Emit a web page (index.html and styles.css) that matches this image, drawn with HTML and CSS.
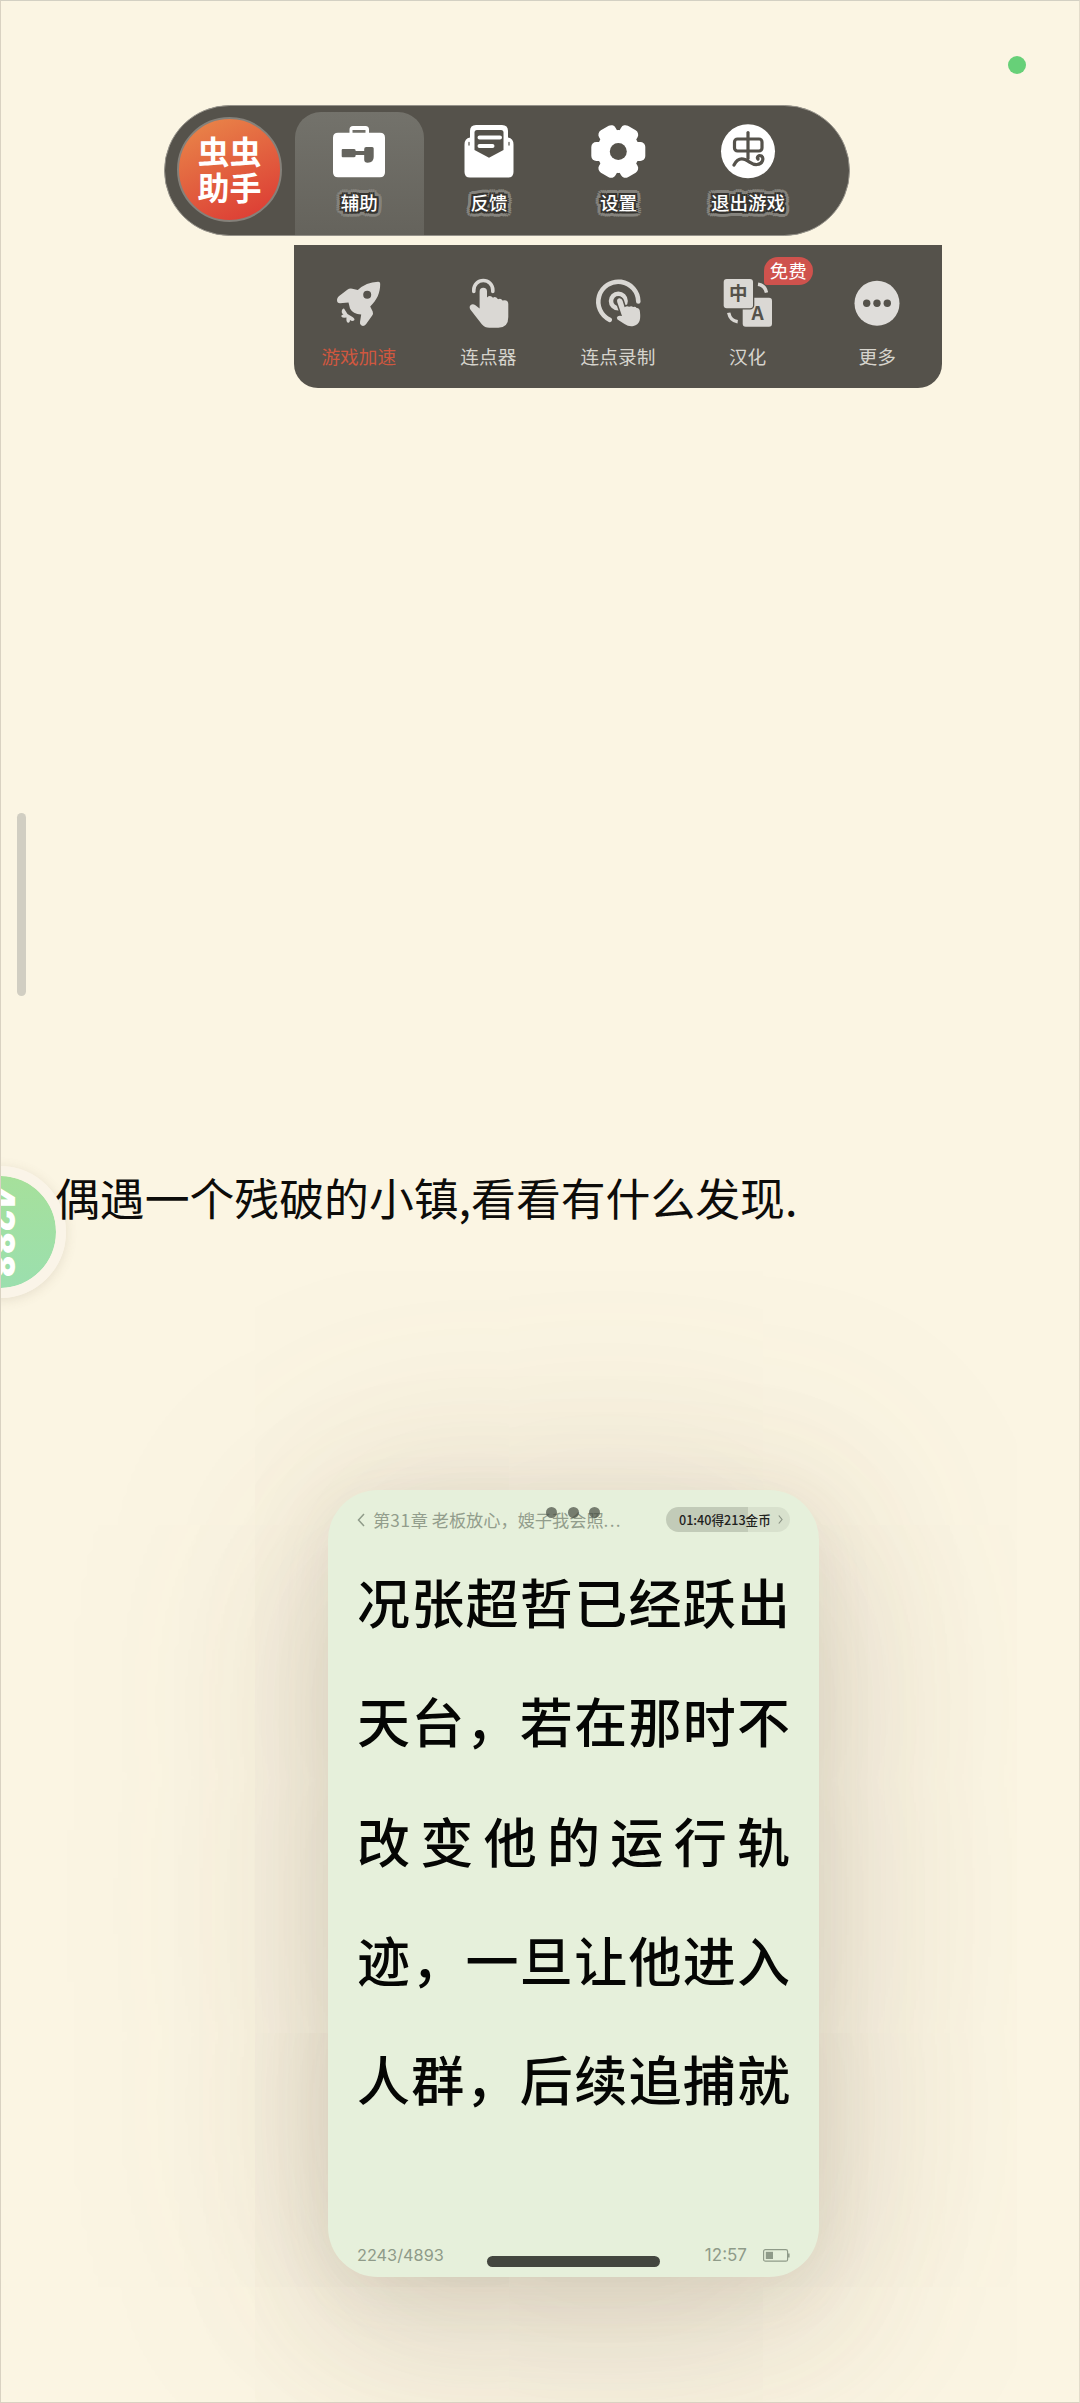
FILE: index.html
```html
<!DOCTYPE html>
<html lang="zh-CN">
<head>
<meta charset="utf-8">
<title>虫虫助手</title>
<link rel="stylesheet" href="styles.css">
</head>
<body>
<main class="screen">
  <span class="privacy-dot"></span>
  <span class="scroll-handle"></span>

  <nav class="toolbar">
    <div class="brand"><span>虫虫</span><span>助手</span></div>
    <div class="tab tab-active">
      <svg class="icon" viewBox="0 0 60 60">
        <path fill="#fff" fill-rule="evenodd" d="M24 4h12.500q3.500 0 3.500 3.500v3.200h11q5 0 5 5v34.600q0 5-5 5H9q-5 0-5-5V15.700q0-5 5-5h11.500V7.500Q20.500 4 24 4ZM23.500 8v2.700h13V8Z"/>
        <path fill="#65645e" d="M13.700 27h11.500q1.500 0 1.500 2h8.500v-2q0-2 2-2h6q1.500 0 1.500 1.500V35q0 5.700-6 5.700-3.500 0-3.500-3V33h-8.500q0 2.300-1.500 2.300H13.700q-1 0-1-1V28q0-1 1-1Z"/>
      </svg>
      <span class="tab-label">辅助</span>
    </div>
    <div class="tab">
      <svg class="icon" viewBox="0 0 60 60">
        <path fill="#fff" d="M17 3h26q6 0 6 6v6.500q5.500 1 5.500 7V50q0 5.500-5.500 5.500H11q-5.500 0-5.500-5.500V22.500q0-6 5.500-7V9q0-6 6-6Z"/>
        <path fill="#55524b" d="M18 8h24q2.500 0 2.500 2.500v17.500L30 35.700 15.500 28V10.500Q15.500 8 18 8Z"/>
        <path stroke="#fff" stroke-width="4" stroke-linecap="round" d="M20.500 15.500h20.500M20.500 24h13"/>
        <path stroke="#77756f" stroke-width="1.500" stroke-linecap="round" d="M10 20.500v2.500M50 20.500v2.500"/>
      </svg>
      <span class="tab-label">反馈</span>
    </div>
    <div class="tab">
      <svg class="icon" viewBox="0 0 60 60">
        <g fill="#fff" transform="translate(30.300 29.500)">
          <circle r="21.500"/>
          <rect x="-27" y="-9.500" width="54" height="19" rx="5"/>
          <rect x="-27" y="-9.500" width="54" height="19" rx="5" transform="rotate(60)"/>
          <rect x="-27" y="-9.500" width="54" height="19" rx="5" transform="rotate(120)"/>
          <circle r="8.500" fill="#55524b"/>
        </g>
      </svg>
      <span class="tab-label">设置</span>
    </div>
    <div class="tab">
      <svg class="icon" viewBox="0 0 60 60">
        <circle cx="30" cy="29.300" r="27" fill="#fff"/>
        <g fill="none" stroke="#55524b" stroke-width="3.200" stroke-linecap="round">
          <rect x="16.500" y="17" width="27.500" height="12" rx="3"/>
          <path d="M30 10.500v26"/>
          <path d="M16 43q4-8 11-5.500c5 2 7 5.500 12 5 6-.5 7-6.500 4.500-8.500-3-1.500-5 1.500-3.500 3"/>
        </g>
      </svg>
      <span class="tab-label">退出游戏</span>
    </div>
  </nav>

  <section class="panel">
    <div class="tool">
      <svg class="icon" viewBox="0 0 60 60" fill="#dad8d4">
        <path fill-rule="evenodd" d="M49 7.700q2.200-.2 2.200 2c0 9.500-3.200 16-10 22.800l2.500 5q.8 2-.5 4L37 50.200q-2 2.500-4.500 1.400-2-.8-1.500-3.500l1.200-7.500q-8.500-.6-11.200-6l-1.500-6-8.500.6q-3 0-3-3.200 0-2.300 1.800-3.800l8.500-6.500q2.200-1.600 5-1l5.500 1.200Q37 8.300 49 7.700ZM38.200 16.700a4 4 0 1 0 0 8 4 4 0 0 0 0-8Z"/>
        <path d="M15 34.500l3.500 5.500 5 3q3 2 1.500 3.500-2 1-4-.5 0 3.500-2.500 2.500-1.500-1-1-5-4 .5-5-.8-.7-1.700 2-2.200-2.500-1.500-1.500-4.500.8-1.800 2-1.500Z"/>
      </svg>
      <span class="tool-label tool-label-hot">游戏加速</span>
    </div>
    <div class="tool">
      <svg class="icon" viewBox="0 0 60 60" fill="#dad8d4">
        <path fill="none" stroke="#dad8d4" stroke-width="3.600" stroke-linecap="round" d="M15.800 17.500v-1.500a9.500 9.500 0 0 1 19 0v1.500"/>
        <path d="M21.600 17.400a3.700 3.700 0 0 1 7.400 0v6.200q3-3 6 .1 2.500-1.700 5 1.500 3-1.400 4.500 1.200 5.800-1.200 5.800 3.600v13q0 10.700-10 10.700h-9q-4.500 0-7.500-3.500L12.700 36q-2-3-.2-4.800 2-1.700 4.600-.3l4.500 3.600Z"/>
      </svg>
      <span class="tool-label">连点器</span>
    </div>
    <div class="tool">
      <svg class="icon" viewBox="0 0 60 60" fill="#dad8d4">
        <g fill="none" stroke="#dad8d4" stroke-linecap="round">
          <path stroke-width="4.600" d="M50.300 27.500a20 20 0 1 0-28.500 18.300"/>
          <circle cx="30.300" cy="27" r="7.300" stroke-width="4.500"/>
        </g>
        <path stroke="#55524b" stroke-width="3" paint-order="stroke" d="M29.200 28q-.7-3.200 2-3.700 2.500-.3 3.400 2.500l2 6.500q2.500-2 4.500-.5 2.300-1.300 4 .2 2.500-.7 3.500 1 3-.2 3.300 3.500.8 6.500-.4 9.500-1.500 4-6 5-4.500 1-9-2l-7-4.500q-1.500-2 .3-3.300 1.200-.8 4.200-.2Z"/>
      </svg>
      <span class="tool-label">连点录制</span>
    </div>
    <div class="tool">
      <svg class="icon" viewBox="0 0 60 60" fill="#dad8d4">
        <path fill="none" stroke="#dad8d4" stroke-width="3.400" d="M40 10.200q7 1 8.500 8.500M10.700 38.800q1.500 8 9 9"/>
        <rect x="24.700" y="23.700" width="29.300" height="29" rx="3"/>
        <rect x="5.700" y="5" width="29.300" height="29.300" rx="3" stroke="#55524b" stroke-width="2.600" paint-order="stroke"/>
        <text class="glyph" x="20.300" y="26.300" font-size="18.500">中</text>
        <text class="glyph" x="39.600" y="46" font-size="19">A</text>
      </svg>
      <span class="tool-label">汉化</span>
      <span class="badge">免费</span>
    </div>
    <div class="tool">
      <svg class="icon" viewBox="0 0 60 60">
        <circle cx="30" cy="29.300" r="22.500" fill="#dfddda"/>
        <g fill="#55524b"><circle cx="19.700" cy="29.300" r="3.700"/><circle cx="30" cy="29.300" r="3.700"/><circle cx="40.300" cy="29.300" r="3.700"/></g>
      </svg>
      <span class="tool-label">更多</span>
    </div>
  </section>

  <div class="speed-ball"><span>4288</span></div>
  <p class="story">偶遇一个残破的小镇,看看有什么发现.</p>

  <article class="reader">
    <header class="reader-head">
      <svg class="back" viewBox="0 0 8 14"><path d="M7 1 1.500 7 7 13" fill="none" stroke="#8f9a89" stroke-width="1.500"/></svg>
      <span class="chapter">第<span class="num">31</span>章 老板放心，嫂子我会照<span class="more">...</span></span>
      <span class="coins">01:40得213金币<svg viewBox="0 0 5 9"><path d="M.8.5 4 4.500.8 8.500" fill="none" stroke="#8b9485" stroke-width="1.200"/></svg></span>
      <span class="dots"><i></i><i></i><i></i></span>
    </header>
    <div class="lines">
      <p>况张超哲已经跃出</p>
      <p>天台，若在那时不</p>
      <p>改变他的运行轨</p>
      <p>迹，一旦让他进入</p>
      <p>人群，后续追捕就</p>
    </div>
    <footer class="reader-foot">
      <span class="pages">2243/4893</span>
      <span class="clock">12:57</span>
      <svg class="battery" viewBox="0 0 27 13"><rect x=".6" y=".6" width="24" height="11.600" rx="1.800" fill="none" stroke="#8f9b89" stroke-width="1.200"/><rect x="2.800" y="2.800" width="7.200" height="7.200" fill="#8f9b89"/><path d="M25.800 4.500v4" stroke="#8f9b89" stroke-width="1.600"/></svg>
      <span class="home-bar"></span>
    </footer>
  </article>
</main>
</body>
</html>
```
FILE: styles.css
```css
* { box-sizing: border-box; }
body {
  margin: 0;
  font-family: "Noto Sans CJK SC", sans-serif;
}
p { margin: 0; }
.screen {
  position: relative;
  width: 1080px;
  height: 2403px;
  overflow: hidden;
  background: #fbf5e3;
  border: 1px solid #d9d2c2;
  border-right-color: #e3dccb;
  border-top-color: #d3d0c3;
  padding-top: 104px;
}
.privacy-dot {
  position: absolute;
  left: 1007px;
  top: 55px;
  width: 18px;
  height: 18px;
  border-radius: 50%;
  background: #67d078;
}
.scroll-handle {
  position: absolute;
  left: 15.500px;
  top: 812px;
  width: 9px;
  height: 183px;
  border-radius: 5px;
  background: #d1cec2;
}
.toolbar {
  display: flex;
  width: 686px;
  height: 131px;
  margin-left: 163px;
  padding: 6px 0 0 12px;
  border: 1px solid #95928a;
  border-radius: 66px;
  background: #55524b;
}
.brand {
  display: flex;
  flex-direction: column;
  align-items: center;
  justify-content: center;
  width: 105px;
  height: 105px;
  margin: 5px 12.500px 0 0;
  padding-bottom: 3px;
  border: 2px solid #85817a;
  border-radius: 50%;
  background: linear-gradient(155deg, #e98348 8%, #e2603f 50%, #dd3f35 90%);
  color: #fff;
  font-size: 32px;
  font-weight: 700;
  line-height: 36px;
}
.tab {
  display: flex;
  flex-direction: column;
  align-items: center;
  width: 129.600px;
  height: 123px;
  padding-top: 10px;
}
.tab-active {
  border-radius: 26px 26px 0 0;
  background: linear-gradient(#73726b, #65635c);
}
.icon {
  display: block;
  width: 60px;
  height: 60px;
}
.tab-label {
  margin-top: 6px;
  color: #fff;
  font-size: 18.500px;
  font-weight: 500;
  line-height: 28px;
  text-shadow:
    2px 0 0 #35332f, -2px 0 0 #35332f, 0 2px 0 #35332f, 0 -2px 0 #35332f,
    2px 2px 0 #35332f, -2px 2px 0 #35332f, 2px -2px 0 #35332f, -2px -2px 0 #35332f,
    5px 0 0 #85837d, -5px 0 0 #85837d, 0 5px 0 #85837d, 0 -5px 0 #85837d,
    5px 2px 0 #85837d, -5px 2px 0 #85837d, 5px -2px 0 #85837d, -5px -2px 0 #85837d,
    2px 5px 0 #85837d, -2px 5px 0 #85837d, 2px -5px 0 #85837d, -2px -5px 0 #85837d,
    4px 4px 0 #85837d, -4px 4px 0 #85837d, 4px -4px 0 #85837d, -4px -4px 0 #85837d,
    3px 0 0 #85837d, -3px 0 0 #85837d, 0 3px 0 #85837d, 0 -3px 0 #85837d;
}
.panel {
  display: flex;
  width: 648px;
  height: 143px;
  margin: 9px 0 0 293px;
  padding-top: 29px;
  border-radius: 0 0 24px 24px;
  background: #55524b;
}
.tool {
  position: relative;
  display: flex;
  flex-direction: column;
  align-items: center;
  width: 129.600px;
}
.tool-label {
  margin-top: 8px;
  color: #d6d4cd;
  font-size: 18.700px;
  line-height: 28px;
}
.tool-label-hot { color: #cf573f; }
.badge {
  position: absolute;
  left: 81px;
  top: -17px;
  width: 49px;
  height: 28px;
  border-radius: 14px 14px 14px 3px;
  background: #cf524d;
  color: #fff;
  font-size: 18.500px;
  line-height: 27px;
  text-align: center;
}
.glyph {
  fill: #55524b;
  font-family: "Noto Sans CJK SC", sans-serif;
  font-weight: 700;
  text-anchor: middle;
}
.speed-ball {
  position: absolute;
  left: -67px;
  top: 1165px;
  display: flex;
  align-items: center;
  justify-content: center;
  width: 132px;
  height: 132px;
  border: 10px solid #faf4e8;
  border-radius: 50%;
  background: linear-gradient(#a6e09b, #9bdfae) padding-box;
  box-shadow: 0 2px 12px rgba(120, 105, 80, .16);
}
.speed-ball span {
  color: #fff;
  font-family: Inter, sans-serif;
  font-size: 34px;
  font-weight: 900;
  line-height: 34px;
  transform: translateX(2px) rotate(90deg);
}
.story {
  position: relative;
  margin: 777px 0 0 54px;
  color: #0d0c0a;
  font-size: 44.850px;
  line-height: 64px;
  white-space: nowrap;
}
.reader {
  display: flex;
  flex-direction: column;
  width: 491px;
  height: 787px;
  margin: 261px 0 0 327px;
  padding: 16px 29px 0;
  border-radius: 50px;
  background: #e6f0db;
  box-shadow:
    0 16px 60px rgba(110, 95, 75, .09),
    0 40px 160px rgba(110, 95, 75, .18),
    0 20px 320px 30px rgba(110, 95, 75, .13);
}
.reader-head {
  position: relative;
  display: flex;
  align-items: center;
  height: 27px;
  color: #929d8c;
}
.back { width: 8px; height: 14px; margin-right: 8px; }
.chapter {
  font-size: 17.200px;
  line-height: 27px;
  white-space: nowrap;
}
.num { letter-spacing: .7px; }
.more { letter-spacing: 1.300px; }
.coins {
  display: flex;
  align-items: center;
  width: 124px;
  height: 25px;
  margin: 0 0 0 auto;
  padding-left: 13px;
  border-radius: 13px;
  background: linear-gradient(90deg, #c2cbb8 82px, #d8e1cd 82px);
  color: #1f211d;
  font-size: 12.600px;
  font-weight: 500;
  white-space: nowrap;
}
.coins svg { width: 5px; height: 9px; margin: 0 7px 0 auto; }
.dots {
  position: absolute;
  left: 189px;
  top: 1px;
  display: flex;
  gap: 10.500px;
}
.dots i {
  width: 11px;
  height: 11px;
  border-radius: 50%;
  background: rgba(70, 75, 66, .7);
}
.lines {
  margin-top: 9px;
  color: #050604;
  font-size: 53px;
  font-weight: 500;
  line-height: 119.300px;
}
.lines p {
  height: 119.300px;
  text-align: justify;
  text-align-last: justify;
  white-space: nowrap;
  text-justify: inter-character;
}
.reader-foot {
  position: relative;
  display: flex;
  align-items: center;
  height: 26px;
  margin-top: 104px;
  color: #8f9b89;
  font-family: Inter, sans-serif;
  font-size: 17px;
}
.pages { font-size: 16.300px; }
.clock { margin-left: auto; }
.battery { width: 27px; height: 13px; margin-left: 16px; }
.home-bar {
  position: absolute;
  left: 130px;
  top: 14px;
  width: 173px;
  height: 11px;
  border-radius: 6px;
  background: #43463f;
}
```
